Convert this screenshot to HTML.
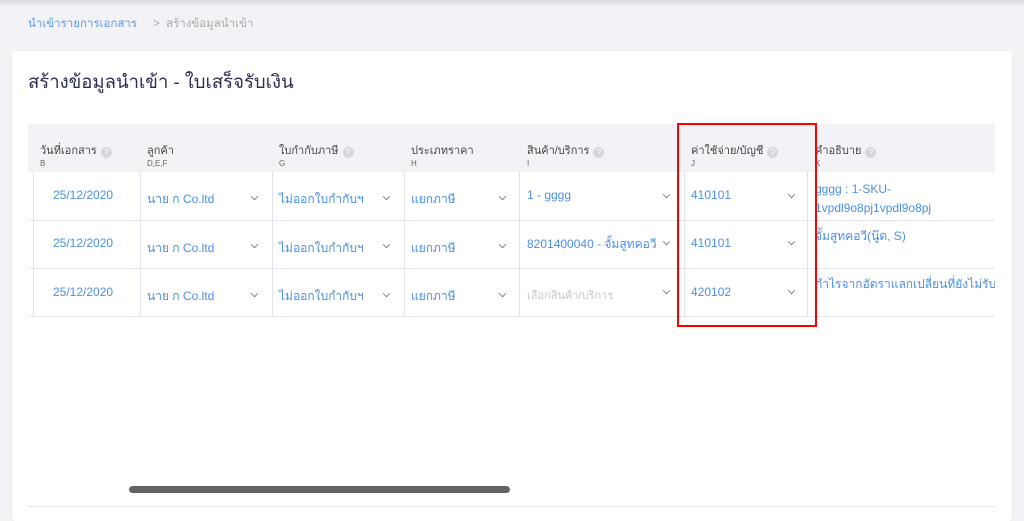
<!DOCTYPE html>
<html><head><meta charset="utf-8"><style>
*{margin:0;padding:0;box-sizing:border-box}
body{width:1024px;height:512px;background:#f3f3f7;font-family:"Liberation Sans","Noto Sans CJK SC",sans-serif;position:relative;overflow:hidden}
.a{position:absolute;white-space:nowrap}
.topbar{left:0;top:0;width:1024px;height:2px;background:#dcdce2;box-shadow:0 1px 3px rgba(0,0,0,.15)}
.card{left:12px;top:51px;width:1000px;height:470px;background:#fff;border-radius:4px;box-shadow:0 0 2px rgba(0,0,0,.06)}
.hdr{left:28px;top:124px;width:967px;height:48px;background:#f3f3f7}
.h{font-size:11px;color:#444}
.s{font-size:8px;color:#666}
.q{display:inline-block;width:11px;height:11px;border-radius:50%;background:#d6d6dc;color:#fff;font-size:8px;text-align:center;line-height:11px;vertical-align:-1px;margin-left:4px}
.v{width:1px;background:#e2e2ea}
.hl{height:1px;background:#e4e4ec;left:28px;width:967px}
.t{font-size:12px;color:#4a8fe7}
.p{font-size:11px;color:#c5c5cc}
.ch{width:7px;height:7px;border-right:1.3px solid #666;border-bottom:1.3px solid #666;transform:rotate(45deg) scale(.75)}
</style></head><body>
<div class="a topbar"></div>
<div class="a" style="left:28px;top:15px;font-size:11.5px;color:#5b9bea">นำเข้ารายการเอกสาร</div>
<div class="a" style="left:153px;top:15px;font-size:11.5px;color:#aaa">&gt;&nbsp; สร้างข้อมูลนำเข้า</div>
<div class="a card"></div>
<div class="a" style="left:28px;top:68px;font-size:18.5px;color:#2d2d55">สร้างข้อมูลนำเข้า - ใบเสร็จรับเงิน</div>
<div class="a hdr"></div>
<div class="a h" style="left:40px;top:141px">วันที่เอกสาร<span class="q">?</span></div><div class="a s" style="left:40px;top:159px">B</div>
<div class="a h" style="left:147px;top:141px">ลูกค้า</div><div class="a s" style="left:147px;top:159px">D,E,F</div>
<div class="a h" style="left:279px;top:141px">ใบกำกับภาษี<span class="q">?</span></div><div class="a s" style="left:279px;top:159px">G</div>
<div class="a h" style="left:411px;top:141px">ประเภทราคา</div><div class="a s" style="left:411px;top:159px">H</div>
<div class="a h" style="left:527px;top:141px">สินค้า/บริการ<span class="q">?</span></div><div class="a s" style="left:527px;top:159px">I</div>
<div class="a h" style="left:691px;top:141px">ค่าใช้จ่าย/บัญชี<span class="q">?</span></div><div class="a s" style="left:691px;top:159px">J</div>
<div class="a h" style="left:815px;top:141px">คำอธิบาย<span class="q">?</span></div><div class="a s" style="left:815px;top:159px">K</div>
<div class="a v" style="left:33px;top:172px;height:144px"></div>
<div class="a v" style="left:140px;top:172px;height:144px"></div>
<div class="a v" style="left:272px;top:172px;height:144px"></div>
<div class="a v" style="left:404px;top:172px;height:144px"></div>
<div class="a v" style="left:519px;top:172px;height:144px"></div>
<div class="a v" style="left:684px;top:172px;height:144px"></div>
<div class="a v" style="left:807px;top:172px;height:144px"></div>
<div class="a hl" style="top:220px"></div>
<div class="a hl" style="top:268px"></div>
<div class="a hl" style="top:316px"></div>

<div class="a t" style="left:53px;top:188px">25/12/2020</div>
<div class="a t" style="left:53px;top:236px">25/12/2020</div>
<div class="a t" style="left:53px;top:285px">25/12/2020</div>

<div class="a t" style="left:147px;top:190px">นาย ก Co.ltd</div>
<div class="a t" style="left:147px;top:239px">นาย ก Co.ltd</div>
<div class="a t" style="left:147px;top:287px">นาย ก Co.ltd</div>
<div class="a t" style="left:279px;top:190px">ไม่ออกใบกำกับฯ</div>
<div class="a t" style="left:279px;top:239px">ไม่ออกใบกำกับฯ</div>
<div class="a t" style="left:279px;top:287px">ไม่ออกใบกำกับฯ</div>
<div class="a t" style="left:411px;top:190px">แยกภาษี</div>
<div class="a t" style="left:411px;top:239px">แยกภาษี</div>
<div class="a t" style="left:411px;top:287px">แยกภาษี</div>
<div class="a t" style="left:527px;top:188px">1 - gggg</div>
<div class="a t" style="left:527px;top:235px;width:132px;overflow:hidden">8201400040 - จั้มสูทคอวี</div>
<div class="a p" style="left:527px;top:286px">เลือกสินค้า/บริการ</div>
<div class="a t" style="left:691px;top:188px">410101</div>
<div class="a t" style="left:691px;top:236px">410101</div>
<div class="a t" style="left:691px;top:285px">420102</div>
<div class="a t" style="left:815px;top:180px;line-height:19px">gggg : 1-SKU-<br>1vpdl9o8pj1vpdl9o8pj</div>
<div class="a t" style="left:815px;top:227px">จั้มสูทคอวี(นู๊ด, S)</div>
<div class="a t" style="left:815px;top:275px;width:180px;overflow:hidden">กำไรจากอัตราแลกเปลี่ยนที่ยังไม่รับรู้</div>

<div class="a ch" style="left:251px;top:193px"></div><div class="a ch" style="left:251px;top:241px"></div><div class="a ch" style="left:251px;top:290px"></div>
<div class="a ch" style="left:383px;top:193px"></div><div class="a ch" style="left:383px;top:241px"></div><div class="a ch" style="left:383px;top:290px"></div>
<div class="a ch" style="left:499px;top:193px"></div><div class="a ch" style="left:499px;top:241px"></div><div class="a ch" style="left:499px;top:290px"></div>
<div class="a ch" style="left:663px;top:191px"></div><div class="a ch" style="left:663px;top:238px"></div><div class="a ch" style="left:663px;top:287px"></div>
<div class="a ch" style="left:788px;top:191px"></div><div class="a ch" style="left:788px;top:238px"></div><div class="a ch" style="left:788px;top:287px"></div>

<div class="a" style="left:677px;top:123px;width:140px;height:204px;border:2px solid #f00"></div>
<div class="a" style="left:129px;top:486px;width:381px;height:7px;border-radius:4px;background:#636363"></div>
<div class="a hl" style="top:506px"></div>
</body></html>
